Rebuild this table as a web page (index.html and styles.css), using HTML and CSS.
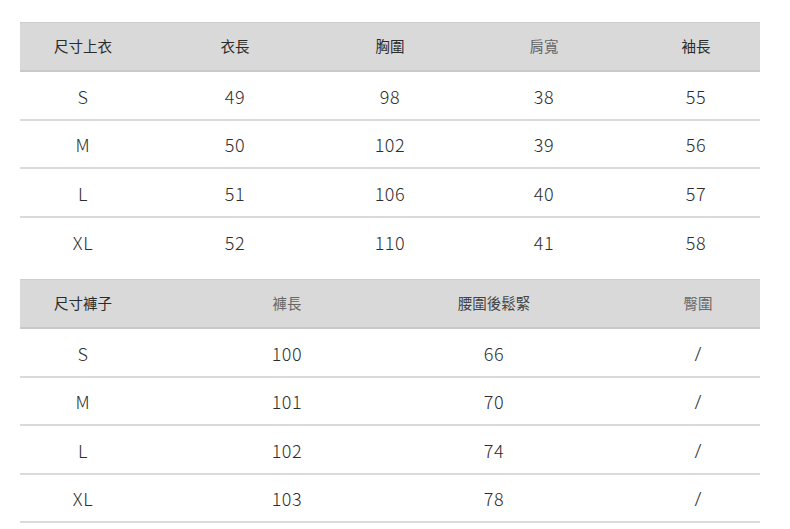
FILE: index.html
```html
<!DOCTYPE html>
<html lang="zh-Hant">
<head>
<meta charset="utf-8">
<title>尺寸表</title>
<link rel="stylesheet" href="styles.css">
</head>
<body>
<div class="page">
  <div class="table top">
    <div class="row head">
      <div class="c">尺寸上衣</div>
      <div class="c">衣長</div>
      <div class="c">胸圍</div>
      <div class="c light">肩寬</div>
      <div class="c">袖長</div>
    </div>
    <div class="row"><div class="c">S</div><div class="c">49</div><div class="c">98</div><div class="c">38</div><div class="c">55</div></div>
    <div class="row"><div class="c">M</div><div class="c">50</div><div class="c">102</div><div class="c">39</div><div class="c">56</div></div>
    <div class="row"><div class="c">L</div><div class="c">51</div><div class="c">106</div><div class="c">40</div><div class="c">57</div></div>
    <div class="row last"><div class="c">XL</div><div class="c">52</div><div class="c">110</div><div class="c">41</div><div class="c">58</div></div>
  </div>
  <div class="table bottom">
    <div class="row head">
      <div class="c">尺寸褲子</div>
      <div class="c light">褲長</div>
      <div class="c mid">腰圍後鬆緊</div>
      <div class="sp"></div>
      <div class="c light">臀圍</div>
    </div>
    <div class="row"><div class="c">S</div><div class="c">100</div><div class="c">66</div><div class="sp"></div><div class="c slash">/</div></div>
    <div class="row"><div class="c">M</div><div class="c">101</div><div class="c">70</div><div class="sp"></div><div class="c slash">/</div></div>
    <div class="row"><div class="c">L</div><div class="c">102</div><div class="c">74</div><div class="sp"></div><div class="c slash">/</div></div>
    <div class="row"><div class="c">XL</div><div class="c">103</div><div class="c">78</div><div class="sp"></div><div class="c slash">/</div></div>
  </div>
</div>
</body>
</html>
```
FILE: styles.css
```css
html, body {
  margin: 0;
  padding: 0;
  background: #ffffff;
}
body {
  font-family: "Noto Sans CJK TC", "Noto Sans", sans-serif;
  color: #333333;
}
.page {
  padding: 22px 30px 0 20px;
  display: flex;
  flex-direction: column;
  gap: 13px;
}
.table {
  width: 740px;
  display: flex;
  flex-direction: column;
}
.row {
  display: grid;
  height: 48.5px;
  box-sizing: border-box;
  border-bottom: 2px solid #dadada;
  align-items: center;
}
.top .row {
  grid-template-columns: 126px 178px 132px 176px 128px;
}
.bottom .row {
  grid-template-columns: 126px 282px 132px 76px 124px;
}
.row.last {
  border-bottom: 0;
}
.row.head {
  height: 50px;
  background: #d9d9d9;
  border-top: 1px solid #cdcdcd;
  border-bottom: 2px solid #c9c9c9;
}
.c {
  text-align: center;
  font-size: 18px;
  line-height: 1;
  font-weight: 300;
  letter-spacing: 0.6px;
  color: #2e2e2e;
  padding-top: 1px;
}
.head .c {
  font-size: 14.5px;
  font-weight: 400;
  letter-spacing: 0;
  color: #2a2a2a;
  padding-top: 0;
}
.head .c.light {
  color: #666666;
}
.head .c.mid {
  color: #444444;
}
.c.slash {
  font-family: "Noto Sans", sans-serif;
  font-size: 20px;
  color: #3a3a3a;
  font-weight: 300;
  letter-spacing: 0;
  padding-top: 3px;
}
```
